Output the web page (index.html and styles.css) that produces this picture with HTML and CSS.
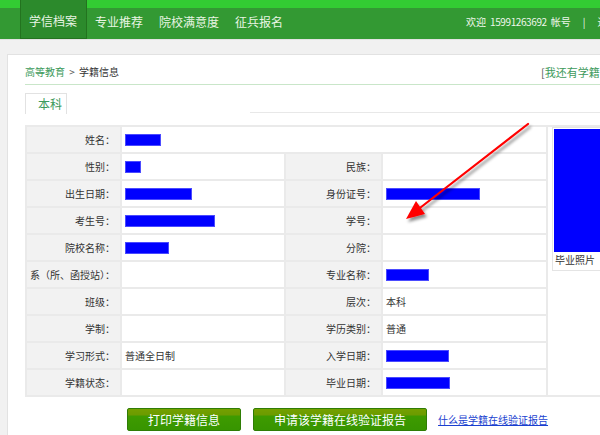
FILE: index.html
```html
<!DOCTYPE html>
<html lang="zh-CN">
<head>
<meta charset="utf-8">
<title>学籍信息</title>
<link rel="stylesheet" href="styles.css">
</head>
<body>
<header class="topbar">
  <nav class="nav">
    <a class="nav-item active">学信档案</a>
    <a class="nav-item">专业推荐</a>
    <a class="nav-item">院校满意度</a>
    <a class="nav-item">征兵报名</a>
  </nav>
  <div class="user">欢迎 <span class="phone">15991263692</span> 帐号 <span class="sep">|</span> 退出</div>
</header>

<main class="panel">
  <div class="crumbs">
    <div class="crumb-left"><a class="crumb-link">高等教育</a> <span class="gt">&gt;</span> 学籍信息</div>
    <a class="crumb-right"><span class="br">[</span>我还有学籍没有显示<span class="br">]</span></a>
  </div>

  <div class="tabs">
    <span class="tab">本科</span>
    <span class="tab-line"></span>
  </div>

  <div class="info">
    <div class="lbl">姓名：</div>
    <div class="val span3"><span class="mask" style="width:36px"></span></div>
    <div class="photo-cell">
      <div class="photo-box">
        <div class="photo"></div>
        <div class="caption">毕业照片</div>
      </div>
    </div>

    <div class="lbl">性别：</div>
    <div class="val"><span class="mask" style="width:16px"></span></div>
    <div class="lbl">民族：</div>
    <div class="val"></div>

    <div class="lbl">出生日期：</div>
    <div class="val"><span class="mask" style="width:67px"></span></div>
    <div class="lbl">身份证号：</div>
    <div class="val"><span class="mask" style="width:94px"></span></div>

    <div class="lbl">考生号：</div>
    <div class="val"><span class="mask" style="width:90px"></span></div>
    <div class="lbl">学号：</div>
    <div class="val"></div>

    <div class="lbl">院校名称：</div>
    <div class="val"><span class="mask" style="width:44px"></span></div>
    <div class="lbl">分院：</div>
    <div class="val"></div>

    <div class="lbl">系（所、函授站）：</div>
    <div class="val"></div>
    <div class="lbl">专业名称：</div>
    <div class="val"><span class="mask" style="width:43px"></span></div>

    <div class="lbl">班级：</div>
    <div class="val"></div>
    <div class="lbl">层次：</div>
    <div class="val">本科</div>

    <div class="lbl">学制：</div>
    <div class="val"></div>
    <div class="lbl">学历类别：</div>
    <div class="val">普通</div>

    <div class="lbl">学习形式：</div>
    <div class="val">普通全日制</div>
    <div class="lbl">入学日期：</div>
    <div class="val"><span class="mask" style="width:63px"></span></div>

    <div class="lbl">学籍状态：</div>
    <div class="val"></div>
    <div class="lbl">毕业日期：</div>
    <div class="val"><span class="mask" style="width:64px"></span></div>
  </div>

  <div class="actions">
    <button class="btn">打印学籍信息</button>
    <button class="btn">申请该学籍在线验证报告</button>
    <a class="help-link">什么是学籍在线验证报告</a>
  </div>
</main>

<svg class="arrow" width="600" height="435" viewBox="0 0 600 435">
  <defs>
    <filter id="shadow" x="-20%" y="-20%" width="140%" height="140%">
      <feDropShadow dx="2" dy="3" stdDeviation="1.6" flood-color="#000" flood-opacity="0.45"/>
    </filter>
  </defs>
  <g filter="url(#shadow)">
    <line x1="528" y1="124" x2="416" y2="211" stroke="#f00" stroke-width="2.2" stroke-linecap="round"/>
    <polygon points="406,219 425,214 416,201" fill="#f00"/>
  </g>
</svg>
</body>
</html>
```

FILE: styles.css
```css
* { box-sizing: border-box; }

html, body {
  margin: 0;
  padding: 0;
}

body {
  width: 600px;
  height: 435px;
  overflow: hidden;
  position: relative;
  background: #f1f1f1;
  font-family: "Noto Sans CJK SC", "Noto Sans", sans-serif;
  color: #333;
  font-size: 10px;
}

a { text-decoration: none; cursor: pointer; }

/* ---------- top bar ---------- */
.topbar {
  height: 40px;
  display: flex;
  background: linear-gradient(#33cc33 0, #33cc33 8px, #339933 8px, #339933 39px, #dcdcdc 39px, #e9e9e9 40px);
  white-space: nowrap;
}

.nav {
  display: flex;
  height: 39px;
  padding-left: 20px;
}

.nav-item {
  display: flex;
  align-items: center;
  padding: 3px 8px 0;
  font-size: 12px;
  color: #e9f5e4;
}

.nav-item.active {
  padding: 3px 9px 0 8px;
  background: #2c8a2c;
  border: 1px solid #23731f;
  border-top: none;
}

.user {
  margin-left: 175px;
  display: flex;
  align-items: center;
  gap: 4px;
  padding-top: 3px;
  height: 39px;
  font-size: 10px;
  color: #eef6ea;
}

.phone { letter-spacing: -0.4px; }
.sep { margin: 0 8px; }

/* ---------- panel ---------- */
.panel {
  margin: 14px 0 0 7px;
  width: 660px;
  height: 400px;
  background: #fff;
  border: 1px solid #e2e2e2;
  padding-left: 17px;
}

.crumbs {
  display: flex;
  padding: 10px 0 5px;
  line-height: 14px;
  border-bottom: 1px solid #c9e6c9;
  white-space: nowrap;
}

.crumb-left {
  width: 516px;
  font-size: 10px;
  color: #333;
}

.crumb-link { color: #3d9a5c; }
.gt { color: #555; margin: 0 2px; }

.crumb-right {
  font-size: 11px;
  color: #3d9a5c;
}

.crumb-right .br { color: #555; }

/* ---------- tabs ---------- */
.tabs {
  display: flex;
  align-items: flex-end;
  margin-top: 8px;
}

.tab {
  height: 21px;
  line-height: 20px;
  padding: 0 4px 0 12px;
  border: 1px solid #e2e2e2;
  border-bottom: none;
  font-size: 12px;
  color: #3d9a5c;
}

.tab-line {
  flex: 1;
  margin-left: 183px;
  margin-bottom: 1px;
  border-bottom: 1px solid #e8e8e8;
}

/* ---------- info grid ---------- */
.info {
  margin-top: 11px;
  display: grid;
  grid-template-columns: 95px 164px 97px 165px 120px;
  grid-auto-rows: 27px;
  border-top: 2px solid #eaeaea;
  border-left: 2px solid #eaeaea;
}

.lbl, .val {
  display: flex;
  align-items: center;
  border-right: 2px solid #eaeaea;
  border-bottom: 2px solid #eaeaea;
  font-size: 10px;
  color: #333;
  white-space: nowrap;
}

.lbl {
  justify-content: flex-end;
  padding-right: 5px;
  background: #f2f2f2;
}

.val {
  padding-left: 3px;
  background: #fff;
}

.span3 { grid-column: span 3; }

.photo-cell {
  grid-column: 5;
  grid-row: 1 / span 10;
  border-bottom: 2px solid #eaeaea;
  padding: 0 0 0 4px;
}

.photo-box {
  width: 114px;
  border: 1px solid #e4e4e4;
  padding: 1px;
}

.photo {
  width: 110px;
  height: 123px;
  background: #0000ff;
}

.caption {
  font-size: 10px;
  line-height: 12px;
  padding: 2px 0 3px 1px;
  color: #333;
}

.mask {
  display: inline-block;
  height: 12px;
  background: #0000ff;
  border: 1px solid #4b4bff;
}

/* ---------- actions ---------- */
.actions {
  display: flex;
  align-items: center;
  margin-top: 11px;
  padding-left: 102px;
  gap: 12px;
}

.btn {
  height: 23px;
  padding: 0 20px;
  border: 1px solid #2f7d05;
  border-radius: 2px;
  background: linear-gradient(#74a000 0, #6b9b00 30%, #3f9b00 32%, #379500 100%);
  color: #fff;
  font-family: "Noto Sans CJK SC", "Noto Sans", sans-serif;
  font-size: 12px;
  line-height: 21px;
}

.help-link {
  margin-left: -1px;
  font-size: 10px;
  color: #1a3fcf;
  text-decoration: underline;
}

/* ---------- annotation arrow ---------- */
.arrow {
  position: absolute;
  left: 0;
  top: 0;
  pointer-events: none;
}
```
